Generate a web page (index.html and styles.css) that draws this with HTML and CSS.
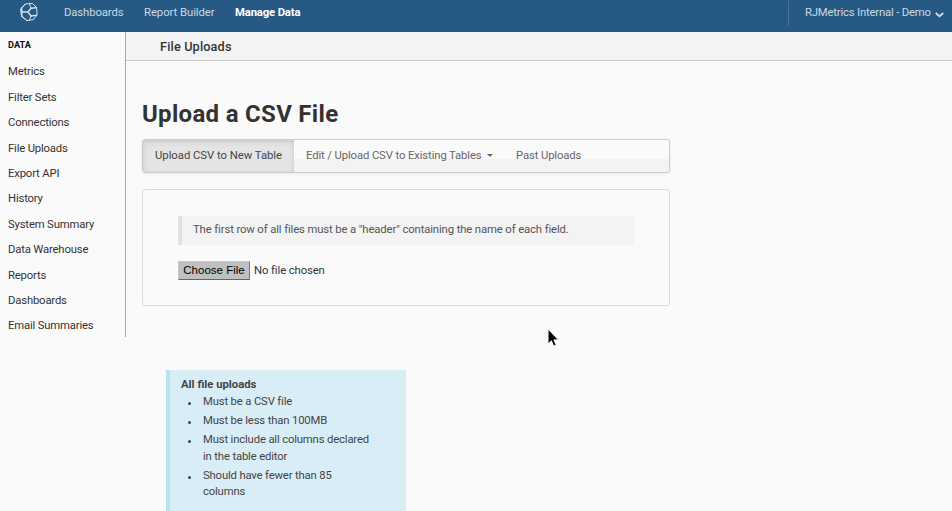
FILE: index.html
```html
<!DOCTYPE html>
<html lang="en">
<head>
<meta charset="utf-8">
<title>File Uploads</title>
<link rel="stylesheet" href="styles.css">
</head>
<body>
<header class="topbar">
  <svg class="logo" viewBox="0 0 20 20" width="20" height="20" fill="none" stroke="#d6e2ec" stroke-width="1" stroke-linejoin="round" stroke-linecap="round">
    <path d="M6.5 2 L13.5 1.4 L17.6 5.5 L18.2 12.6 L14.5 17.6 L8 18.6 L2.6 14.6 L1.6 7.5 Z"/>
    <path stroke-width="1.4" d="M2.8 6V14M3 10H9M9 10L12 6.2L17 5.7M9 10L12 14L17.6 13.2"/>
    <path d="M12 6.2L10.5 2M12 14L10.5 18M6.5 2L2.8 6M2.8 14L8 18.6"/>
  </svg>
  <nav class="mainnav">
    <a class="nav-dash">Dashboards</a>
    <a class="nav-report">Report Builder</a>
    <a class="nav-manage active">Manage Data</a>
  </nav>
  <div class="account">
    <span>RJMetrics Internal - Demo</span>
    <svg class="chevron" viewBox="0 0 9 6" width="9" height="6" fill="none" stroke="#d3e0eb" stroke-width="1.8"><path d="M.8 1L4.5 4.4L8.2 1"/></svg>
  </div>
</header>
<div class="layout">
  <aside class="sidebar">
    <h2>DATA</h2>
    <ul>
      <li>Metrics</li>
      <li>Filter Sets</li>
      <li>Connections</li>
      <li>File Uploads</li>
      <li>Export API</li>
      <li>History</li>
      <li>System Summary</li>
      <li>Data Warehouse</li>
      <li>Reports</li>
      <li>Dashboards</li>
      <li>Email Summaries</li>
    </ul>
  </aside>
  <main class="main">
    <div class="subhead">File Uploads</div>
    <div class="content">
      <h1>Upload a CSV File</h1>
      <div class="tabs">
        <a class="tab current">Upload CSV to New Table</a>
        <a class="tab existing">Edit / Upload CSV to Existing Tables<i class="caret"></i></a>
        <a class="tab past">Past Uploads</a>
      </div>
      <section class="panel">
        <p class="note">The first row of all files must be a "header" containing the name of each field.</p>
        <div class="picker"><button type="button">Choose File</button><span>No file chosen</span></div>
      </section>
      <section class="tips">
        <h3>All file uploads</h3>
        <ul>
          <li>Must be a CSV file</li>
          <li>Must be less than 100MB</li>
          <li>Must include all columns declared<br>in the table editor</li>
          <li>Should have fewer than 85<br>columns</li>
        </ul>
      </section>
    </div>
  </main>
</div>
<svg class="cursor" viewBox="0 0 12 20" width="12" height="20"><path d="M1 1V16L4.4 12.8L6.7 18.2L9.2 17.1L6.9 11.9H11.5Z" fill="#000" stroke="#fff" stroke-width="1"/></svg>
</body>
</html>
```

FILE: styles.css
```css
* { box-sizing: border-box; }
html, body { height: 100%; }
body {
  margin: 0;
  overflow: hidden;
  background: #fafafa;
  color: #333;
  font-family: Roboto, "Liberation Sans", sans-serif;
  font-size: 11.3px;
  letter-spacing: -.1px;
  line-height: 16px;
}
h1, h2, h3, p, ul { margin: 0; padding: 0; }
ul { list-style: none; }

.topbar {
  display: flex;
  height: 32px;
  padding-left: 19px;
  background: #265a84;
  color: #c9d8e5;
}
.logo { margin-top: 2px; }
.mainnav { display: flex; gap: 20px; padding: 5px 0 0 25px; white-space: nowrap; }
.nav-dash { width: 60px; }
.nav-report { width: 71px; letter-spacing: -.05px; }
.mainnav .active { color: #fff; font-weight: 700; letter-spacing: -.15px; }
.account {
  display: flex;
  justify-content: space-between;
  width: 164px;
  height: 25px;
  margin: 1px 0 0 auto;
  padding: 4px 8px 0 16px;
  border-left: 1px solid #4b7698;
  letter-spacing: -.18px;
  white-space: nowrap;
}
.chevron { flex: none; margin-top: 7px; }

.layout { display: flex; align-items: flex-start; }
.sidebar {
  flex: none;
  width: 126px;
  height: 305px;
  padding: 5px 0 0 8px;
  border-right: 1px solid #a9a9a9;
  letter-spacing: -.17px;
}
.sidebar h2 { color: #111; font-size: 9.2px; font-weight: 700; letter-spacing: 0; line-height: 16px; }
.sidebar ul { padding-top: 6.4px; }
.sidebar li { height: 25.4px; line-height: 25.4px; }

.main { flex: 1; }
.subhead {
  height: 29px;
  padding-left: 34px;
  border-bottom: 1px solid #ccc;
  background: #f3f3f3;
  font-size: 12.7px;
  font-weight: 500;
  letter-spacing: .15px;
  line-height: 29px;
}
.content { padding: 38px 0 0 16px; }
h1 { font-size: 24px; font-weight: 700; letter-spacing: .3px; line-height: 30px; }

.tabs {
  display: flex;
  width: 528px;
  height: 34px;
  margin-top: 10px;
  border: 1px solid #ccc;
  border-radius: 3px;
  background: linear-gradient(#fafafa 0 19px, #f3f3f3 19px);
  box-shadow: 0 1px 3px rgba(0, 0, 0, .08);
  color: #666;
  line-height: 32px;
  white-space: nowrap;
}
.tab { padding-left: 12px; letter-spacing: -.12px; }
.tab.current {
  width: 151px;
  background: #e4e4e4;
  box-shadow: inset 0 2px 5px rgba(0, 0, 0, .13);
  color: #444;
  letter-spacing: -.02px;
}
.tab.existing { width: 210px; }
.caret {
  display: inline-block;
  margin-left: 5px;
  border: 3px solid transparent;
  border-top-color: #666;
  border-bottom: 0;
  vertical-align: 2px;
}

.panel {
  width: 528px;
  height: 117px;
  margin-top: 16px;
  padding: 26px 35px 0;
  border: 1px solid #dcdcdc;
  border-radius: 3px;
}
.note {
  height: 29px;
  padding-left: 11px;
  border-left: 4px solid #e2e2e2;
  background: #f3f3f3;
  color: #555;
  letter-spacing: -.12px;
  line-height: 27px;
  white-space: nowrap;
}
.picker { display: flex; gap: 4px; margin-top: 16px; line-height: 19px; }
button {
  width: 72px;
  height: 19px;
  padding: 0;
  border: 1px solid;
  border-color: #c8c8c8 #777 #666 #c8c8c8;
  border-radius: 0;
  background: #c0c0c0;
  color: #000;
  font: 11.5px/17px "Liberation Sans", sans-serif;
}

.tips {
  width: 240px;
  height: 150px;
  margin: 64px 0 0 24px;
  padding: 6px 0 0 11px;
  border-left: 4px solid #b5e7f0;
  background: #d9edf7;
  color: #444;
  letter-spacing: -.16px;
}
.tips h3 { font-size: 11.3px; font-weight: 700; letter-spacing: 0; line-height: 17px; }
.tips ul { padding-top: 1px; }
.tips li { position: relative; margin-bottom: 2.5px; padding-left: 22px; line-height: 16.5px; }
.tips li::before {
  content: "";
  position: absolute;
  left: 7px;
  top: 8px;
  width: 3px;
  height: 3px;
  border-radius: 50%;
  background: #444;
}
.cursor { position: absolute; left: 547px; top: 328px; }
```
